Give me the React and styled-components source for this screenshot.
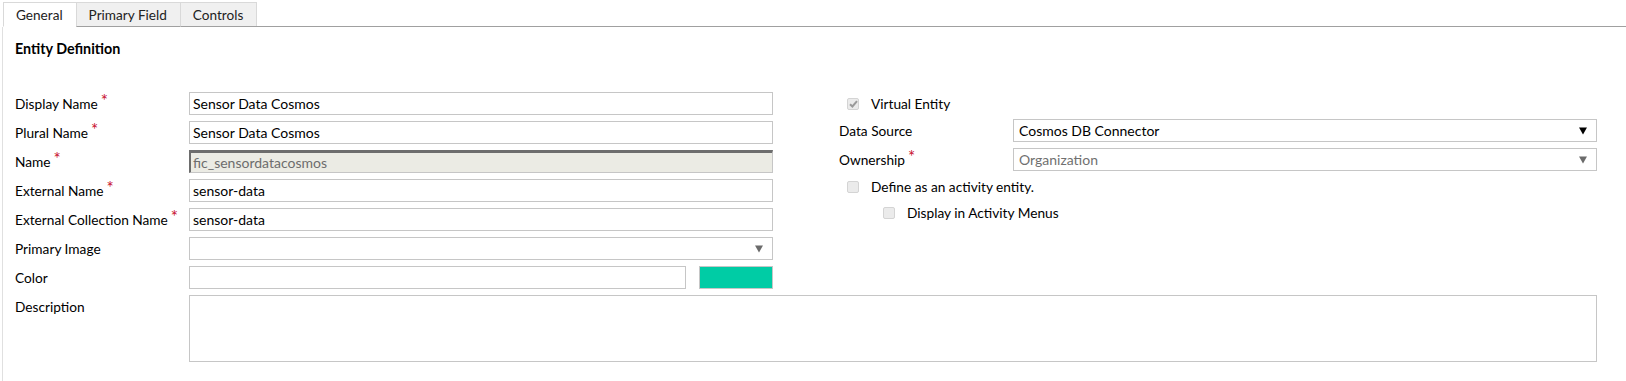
import React from 'react';
import styled, { createGlobalStyle } from 'styled-components';

const GlobalStyle = createGlobalStyle`
  html, body {
    margin: 0;
    background: #fff;
    font-family: "Segoe UI", Lato, "Open Sans", sans-serif;
    color: #000;
  }
`;

const Page = styled.div`
  width: 1626px;
  height: 381px;
  overflow: hidden;
  background: #fff;
`;

const TabBar = styled.div`
  display: flex;
  align-items: flex-end;
  height: 27px;
  padding-left: 3px;
  box-sizing: border-box;
`;

const Tab = styled.div`
  height: 25px;
  padding: 0 13px 0 12px;
  display: flex;
  align-items: center;
  box-sizing: border-box;
  font-size: 13.6px;
  color: #222;
  border: 1px solid #d9d9d9;
  border-bottom: ${(p) => (p.active ? '1px solid #fff' : '1px solid #a0a0a0')};
  background: ${(p) => (p.active ? '#fff' : '#f0f0f0')};
  margin-right: -1px;
`;

const TabFill = styled.div`
  flex: 1;
  border-bottom: 1px solid #a0a0a0;
`;

const Panel = styled.div`
  margin-left: 2px;
  border-left: 1px solid #e0e0e0;
  height: 354px;
  padding: 12px 0 0 12px;
  box-sizing: border-box;
`;

const Heading = styled.div`
  font-size: 14.3px;
  font-weight: 700;
  line-height: 20px;
  height: 20px;
`;

const Columns = styled.div`
  display: flex;
  margin-top: 33px;
`;

const LeftCol = styled.div`
  display: flex;
  flex-direction: column;
  gap: 6px;
  width: 758px;
`;

const RightCol = styled.div`
  display: flex;
  flex-direction: column;
  width: 758px;
  margin-left: 66px;
`;

const Row = styled.div`
  display: flex;
  align-items: center;
  height: 23px;
  margin-top: ${(p) => p.mt || 0}px;
`;

const Label = styled.div`
  width: 174px;
  flex: none;
  font-size: 13.7px;
  line-height: 23px;
  white-space: nowrap;
`;

const Req = styled.span`
  color: #c8102e;
  font-size: 17px;
  margin-left: 3px;
  vertical-align: top;
  position: relative;
  top: -3px;
`;

const Input = styled.div`
  flex: ${(p) => (p.w ? 'none' : '1')};
  width: ${(p) => (p.w ? `${p.w}px` : 'auto')};
  height: 100%;
  box-sizing: border-box;
  border: 1px solid #c6c6c6;
  background: #fff;
  padding-left: ${(p) => p.pl || 3}px;
  font-size: 14px;
  line-height: 21px;
  color: ${(p) => (p.muted ? '#707070' : '#000')};
  position: relative;
  display: flex;
  align-items: center;
  white-space: nowrap;
`;

const Disabled = styled(Input)`
  background: #ebebe4;
  border-top: 3px solid #6d6d6d;
  border-left: 2px solid #6d6d6d;
  color: #6d6d6d;
  padding-left: 2px;
`;

const Arrow = styled.span`
  position: absolute;
  right: 9px;
  top: 50%;
  transform: translateY(-50%);
  width: 0;
  height: 0;
  border-left: 4px solid transparent;
  border-right: 4px solid transparent;
  border-top: 7px solid ${(p) => (p.dark ? '#000' : '#6b6b6b')};
`;

const Swatch = styled.div`
  width: 74px;
  height: 100%;
  box-sizing: border-box;
  border: 1px solid #c6c6c6;
  background: #00cca5;
  margin-left: 13px;
  flex: none;
`;

const Check = styled.span`
  width: 12px;
  height: 12px;
  box-sizing: border-box;
  border: 1px solid #d4d4d4;
  border-radius: 2px;
  background: #ebebeb;
  flex: none;
  display: flex;
  align-items: center;
  justify-content: center;
  margin-left: ${(p) => p.ml || 8}px;
  margin-right: 12px;
`;

const CheckText = styled.span`
  font-size: 13.7px;
  line-height: 23px;
`;

const Description = styled.div`
  display: flex;
  margin-top: 6px;
  height: 67px;
  width: 1582px;
`;

const Field = ({ label, req, children }) => (
  <Row>
    <Label>
      {label}
      {req && <Req>*</Req>}
    </Label>
    {children}
  </Row>
);

const App = () => (
  <Page>
    <GlobalStyle />
    <TabBar>
      <Tab active>General</Tab>
      <Tab>Primary Field</Tab>
      <Tab>Controls</Tab>
      <TabFill />
    </TabBar>
    <Panel>
      <Heading>Entity Definition</Heading>
      <Columns>
        <LeftCol>
          <Field label="Display Name" req>
            <Input>Sensor Data Cosmos</Input>
          </Field>
          <Field label="Plural Name" req>
            <Input>Sensor Data Cosmos</Input>
          </Field>
          <Field label="Name" req>
            <Disabled>fic_sensordatacosmos</Disabled>
          </Field>
          <Field label="External Name" req>
            <Input>sensor-data</Input>
          </Field>
          <Field label="External Collection Name" req>
            <Input>sensor-data</Input>
          </Field>
          <Field label="Primary Image">
            <Input>
              <Arrow />
            </Input>
          </Field>
          <Field label="Color">
            <Input w={497} />
            <Swatch />
          </Field>
        </LeftCol>
        <RightCol>
          <Row>
            <Check>
              <svg width="9" height="8" viewBox="0 0 9 8">
                <path d="M1 4.2 L3.4 6.5 L8 1.2" fill="none" stroke="#9a9a9a" strokeWidth="2" />
              </svg>
            </Check>
            <CheckText>Virtual Entity</CheckText>
          </Row>
          <Row mt={4}>
            <Label>Data Source</Label>
            <Input pl={5}>
              Cosmos DB Connector
              <Arrow dark />
            </Input>
          </Row>
          <Row mt={6}>
            <Label>
              Ownership
              <Req>*</Req>
            </Label>
            <Input pl={5} muted>
              Organization
              <Arrow />
            </Input>
          </Row>
          <Row mt={4}>
            <Check />
            <CheckText>Define as an activity entity.</CheckText>
          </Row>
          <Row mt={3}>
            <Check ml={44} />
            <CheckText>Display in Activity Menus</CheckText>
          </Row>
        </RightCol>
      </Columns>
      <Description>
        <Label>Description</Label>
        <Input />
      </Description>
    </Panel>
  </Page>
);

export default App;
